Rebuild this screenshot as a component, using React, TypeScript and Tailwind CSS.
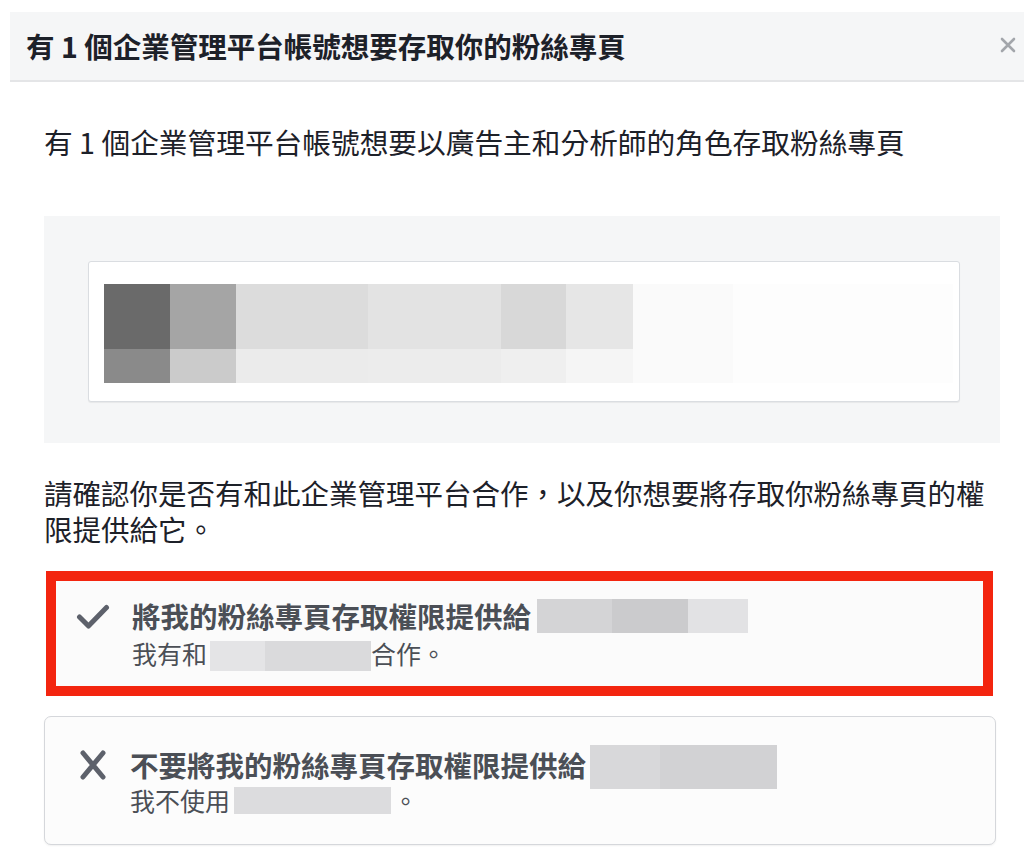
import React from "react";

const Check = () => (
  <svg width="34" height="26" viewBox="0 0 34 26" className="shrink-0">
    <path d="M3.5 13 L12.5 22 L30.5 3.5" fill="none" stroke="#5d616b" strokeWidth="5" strokeLinecap="round" strokeLinejoin="round" />
  </svg>
);

const Cross = () => (
  <svg width="34" height="30" viewBox="0 0 34 30" className="shrink-0">
    <path d="M7 3 L27 27 M27 3 L7 27" fill="none" stroke="#5d616b" strokeWidth="5" strokeLinecap="round" />
  </svg>
);

export default function App() {
  return (
    <div
      className="w-[1024px] h-[860px] bg-white overflow-hidden text-[#1d2129]"
      style={{ fontFamily: '"Noto Sans CJK TC", "Noto Sans", sans-serif' }}
    >
      {/* header */}
      <div className="mt-[12px] ml-[10px] h-[70px] bg-[#f5f6f7] border-b-2 border-[#e4e5e7] flex items-center justify-between pl-[16px] pr-[7px]">
        <div className="text-[28.5px] font-bold leading-[34px]">有 1 個企業管理平台帳號想要存取你的粉絲專頁</div>
        <svg width="18" height="18" viewBox="0 0 18 18" className="mb-[2px]">
          <path d="M3 3 L15 15 M15 3 L3 15" stroke="#a3a6ab" strokeWidth="2.6" strokeLinecap="round" />
        </svg>
      </div>

      <div className="pl-[44px] w-[1000px]">
        <div className="mt-[42px] text-[28.7px] leading-[36px] text-[#1d2129]">有 1 個企業管理平台帳號想要以廣告主和分析師的角色存取粉絲專頁</div>

        {/* gray box */}
        <div className="mt-[56px] h-[227px] bg-[#f5f6f7] pt-[45px] pl-[44px] pr-[40px]">
          <div className="h-[141px] bg-white border border-[#dadde1] rounded-[3px] pt-[22px] pl-[15px] shadow-[0_1px_1px_rgba(0,0,0,0.06)]">
            <div className="flex h-[65px]">
              <div className="w-[66px] bg-[#6a6a6a]" />
              <div className="w-[66px] bg-[#a5a5a5]" />
              <div className="w-[132px] bg-[#dcdcdc]" />
              <div className="w-[133px] bg-[#e3e3e3]" />
              <div className="w-[65px] bg-[#d8d8d8]" />
              <div className="w-[67px] bg-[#e6e6e6]" />
              <div className="w-[100px] bg-[#fafafa]" />
              <div className="w-[220px] bg-[#fdfdfd]" />
            </div>
            <div className="flex h-[34px]">
              <div className="w-[66px] bg-[#8a8a8a]" />
              <div className="w-[66px] bg-[#cbcbcb]" />
              <div className="w-[132px] bg-[#ebebeb]" />
              <div className="w-[133px] bg-[#ececec]" />
              <div className="w-[65px] bg-[#efefef]" />
              <div className="w-[67px] bg-[#f5f5f5]" />
              <div className="w-[100px] bg-[#fafafa]" />
              <div className="w-[220px] bg-[#fdfdfd]" />
            </div>
          </div>
        </div>

        <div className="mt-[32px] text-[28.5px] leading-[36px] text-[#1d2129]">請確認你是否有和此企業管理平台合作，以及你想要將存取你粉絲專頁的權限提供給它。</div>

        {/* option 1 (highlighted) */}
        <div className="mt-[24px] ml-[2px] w-[947px] h-[125px] border-[10px] border-[#f3250f] bg-[#fbfbfb] pt-[18px] pl-[20px]">
          <div className="flex">
            <div className="w-[56px] pt-[5px]">
              <Check />
            </div>
            <div className="flex flex-col">
              <div className="flex items-center h-[34px]">
                <span className="text-[28.5px] font-bold leading-[34px] text-[#4b4f56]">將我的粉絲專頁存取權限提供給</span>
                <span className="ml-[6px] flex h-[34px]">
                  <span className="w-[75px] bg-[#d4d4d6]" />
                  <span className="w-[76px] bg-[#cbcbcd]" />
                  <span className="w-[60px] bg-[#e2e2e4]" />
                </span>
              </div>
              <div className="mt-[4px] flex items-center h-[32px] text-[25px] leading-[32px] text-[#4b4f56]">
                <span>我有和</span>
                <span className="ml-[3px] flex h-[30px] mt-[6px]">
                  <span className="w-[55px] bg-[#e4e4e6]" />
                  <span className="w-[106px] bg-[#dadadc]" />
                </span>
                <span>合作。</span>
              </div>
            </div>
          </div>
        </div>

        {/* option 2 */}
        <div className="mt-[20px] w-[952px] h-[129px] border border-[#d5d7db] rounded-[7px] bg-[#fcfcfc] pt-[30px] pl-[31px] shadow-[0_1px_2px_rgba(0,0,0,0.06)]">
          <div className="flex">
            <div className="w-[54px] pt-[3px]">
              <Cross />
            </div>
            <div className="flex flex-col">
              <div className="flex items-center h-[36px]">
                <span className="text-[28.5px] font-bold leading-[34px] text-[#4b4f56]">不要將我的粉絲專頁存取權限提供給</span>
                <span className="ml-[4px] flex h-[44px] mt-[4px]">
                  <span className="w-[70px] bg-[#d8d8da]" />
                  <span className="w-[117px] bg-[#d2d2d4]" />
                </span>
              </div>
              <div className="flex items-center h-[34px] text-[25px] leading-[32px] text-[#4b4f56]">
                <span>我不使用</span>
                <span className="ml-[4px] flex h-[27px]">
                  <span className="w-[157px] bg-[#dcdcde]" />
                </span>
                <span className="ml-[2px]">。</span>
              </div>
            </div>
          </div>
        </div>
      </div>
    </div>
  );
}
